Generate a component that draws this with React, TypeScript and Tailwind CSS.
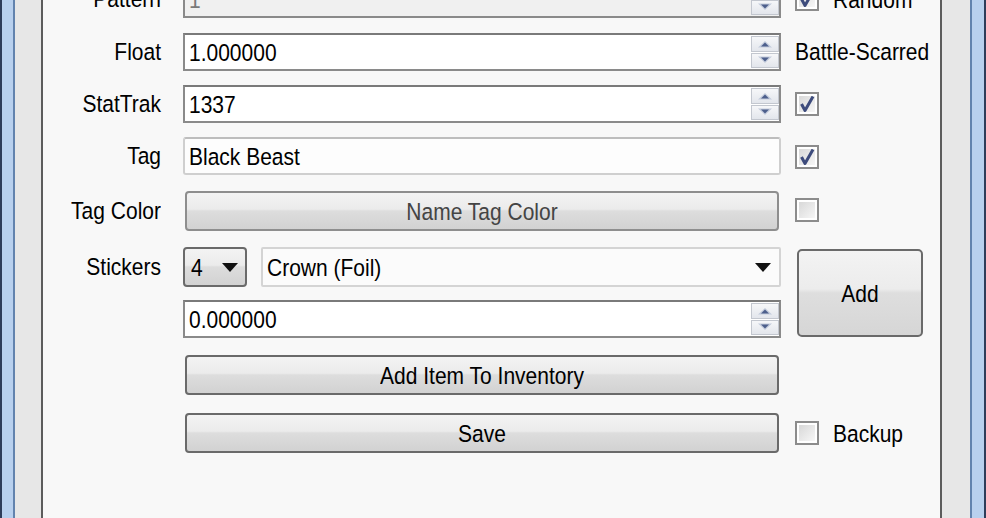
import React from "react";

const font = { fontFamily: '"Liberation Sans", Arial, sans-serif' };

function T({ children, className = "" }: { children: React.ReactNode; className?: string }) {
  return <span className={"inline-block scale-y-[1.13] whitespace-nowrap leading-none " + className}>{children}</span>;
}

function Arrow({ up }: { up?: boolean }) {
  return (
    <svg width="14" height="8" viewBox="0 0 14 8">
      {up ? (
        <>
          <path d="M0 7.5 L7 1 L14 7.5 Z" fill="#c3cbdb" />
          <path d="M3 6.5 L7 2.5 L11 6.5 Z" fill="#4d5f8c" />
        </>
      ) : (
        <>
          <path d="M0 0.5 L7 7 L14 0.5 Z" fill="#c3cbdb" />
          <path d="M3 1.5 L7 5.5 L11 1.5 Z" fill="#4d5f8c" />
        </>
      )}
    </svg>
  );
}

function Spinner() {
  return (
    <div className="flex flex-col w-[28px] h-[32px] gap-[1px] self-center">
      <div className="flex-1 flex items-center justify-center border border-[#c3c7cf] bg-gradient-to-b from-[#f6f7f9] to-[#e3e6ec]">
        <Arrow up />
      </div>
      <div className="flex-1 flex items-center justify-center border border-[#c3c7cf] bg-gradient-to-b from-[#f6f7f9] to-[#e3e6ec]">
        <Arrow />
      </div>
    </div>
  );
}

function NumInput({ value, disabled }: { value: string; disabled?: boolean }) {
  return (
    <div
      className={
        "h-[38px] w-[598px] flex items-stretch border-2 border-[#8a8a8a] border-t-[#7a7a7a] " +
        (disabled ? "bg-[#f0f0f0]" : "bg-white")
      }
    >
      <div className={"flex-1 flex items-center pl-[4px] text-[21px] " + (disabled ? "text-[#7a7a7a]" : "text-black")}>
        <T>{value}</T>
      </div>
      <Spinner />
    </div>
  );
}

function Check({ checked }: { checked?: boolean }) {
  return (
    <div className="w-[24px] h-[24px] border-2 border-[#8c8c8c] bg-white p-[2px]">
      <div className="w-full h-full bg-gradient-to-br from-[#d8d8d8] to-[#f7f7f7] flex items-center justify-center">
        {checked && (
          <svg width="16" height="16" viewBox="0 0 16 16">
            <path d="M2.5 8 L6 14.5 L14 0.5" stroke="#3d4b7c" strokeWidth="3" fill="none" strokeLinejoin="round" />
          </svg>
        )}
      </div>
    </div>
  );
}

function Btn({ children, className = "", textClass = "text-black" }: { children: React.ReactNode; className?: string; textClass?: string }) {
  return (
    <div
      className={
        "rounded-[4px] border-2 border-[#6a6a6a] flex items-center justify-center text-[21px] bg-[linear-gradient(to_bottom,#f3f3f3_0%,#ebebeb_45%,#dddddd_50%,#d2d2d2_100%)] " +
        className
      }
    >
      <T className={textClass}>{children}</T>
    </div>
  );
}

function Label({ children }: { children: React.ReactNode }) {
  return (
    <div className="w-[140px] pr-[22px] text-right text-[21px] text-black shrink-0">
      <T>{children}</T>
    </div>
  );
}

export default function App() {
  return (
    <div className="w-[986px] h-[518px] flex overflow-hidden" style={font}>
      <div className="w-[2px] bg-[#2e3d5a]" />
      <div className="w-[11px] bg-[#b8d0ee]" />
      <div className="w-[2px] bg-[#6283ae]" />
      <div className="w-[26px] bg-[#e7e7e7]" />
      <div className="w-[2px] bg-[#5c5c5c]" />

      <div className="flex-1 bg-[#f8f8f8] flex flex-col">
        {/* Pattern */}
        <div className="flex items-center mt-[-20px] h-[38px]">
          <Label>Pattern</Label>
          <NumInput value="1" disabled />
          <div className="ml-[14px] flex items-center gap-[14px]">
            <Check checked />
            <T className="text-[21px] text-black">Random</T>
          </div>
        </div>

        {/* Float */}
        <div className="flex items-center mt-[15px] h-[38px]">
          <Label>Float</Label>
          <NumInput value="1.000000" />
          <div className="ml-[14px] text-[21px] text-black">
            <T>Battle-Scarred</T>
          </div>
        </div>

        {/* StatTrak */}
        <div className="flex items-center mt-[14px] h-[38px]">
          <Label>StatTrak</Label>
          <NumInput value="1337" />
          <div className="ml-[14px]">
            <Check checked />
          </div>
        </div>

        {/* Tag */}
        <div className="flex items-center mt-[14px] h-[38px]">
          <Label>Tag</Label>
          <div className="h-[38px] w-[598px] rounded-[3px] border-2 border-[#cfcfcf] border-t-[#bdbdbd] bg-[#fdfdfd] flex items-center pl-[4px] text-[21px] text-black">
            <T>Black Beast</T>
          </div>
          <div className="ml-[14px] pt-[2px]">
            <Check checked />
          </div>
        </div>

        {/* Tag Color */}
        <div className="flex items-center mt-[16px] h-[40px]">
          <Label>Tag Color</Label>
          <div className="w-[598px] px-[2px]">
            <Btn className="h-[40px] border-[#8e8e8e] bg-[linear-gradient(to_bottom,#f2f2f2_0%,#ededed_45%,#e4e4e4_50%,#e0e0e0_100%)]" textClass="text-[#444]">
              Name Tag Color
            </Btn>
          </div>
          <div className="ml-[14px] mb-[2px]">
            <Check />
          </div>
        </div>

        {/* Stickers block */}
        <div className="flex mt-[16px]">
          <div className="flex flex-col">
            <div className="flex items-center h-[40px]">
              <Label>Stickers</Label>
              <div className="w-[598px] flex gap-[14px]">
                <div className="w-[64px] h-[40px] rounded-[4px] border-2 border-[#6a6a6a] bg-[linear-gradient(to_bottom,#f3f3f3_0%,#ebebeb_45%,#dddddd_50%,#d2d2d2_100%)] flex items-center justify-between pl-[6px] pr-[7px] text-[21px] text-black">
                  <T>4</T>
                  <svg width="16" height="9" viewBox="0 0 16 9">
                    <path d="M0 0 L16 0 L8 9 Z" fill="#111" />
                  </svg>
                </div>
                <div className="flex-1 h-[40px] rounded-[2px] border-2 border-[#d4d4d4] bg-[#fbfbfb] flex items-center justify-between pl-[4px] pr-[8px] text-[21px] text-black">
                  <T>Crown (Foil)</T>
                  <svg width="16" height="9" viewBox="0 0 16 9">
                    <path d="M0 0 L16 0 L8 9 Z" fill="#111" />
                  </svg>
                </div>
              </div>
            </div>
            <div className="flex items-center h-[38px] mt-[13px]">
              <div className="w-[140px] shrink-0" />
              <NumInput value="0.000000" />
            </div>
          </div>
          <Btn className="ml-[16px] mt-[2px] w-[126px] h-[88px] rounded-[5px] bg-[linear-gradient(to_bottom,#f3f3f3_0%,#ececec_45%,#dedede_50%,#d6d6d6_100%)]">
            Add
          </Btn>
        </div>

        {/* Add item */}
        <div className="flex items-center mt-[17px] h-[40px]">
          <div className="w-[140px] shrink-0" />
          <div className="w-[598px] px-[2px]">
            <Btn className="h-[40px]">Add Item To Inventory</Btn>
          </div>
        </div>

        {/* Save */}
        <div className="flex items-center mt-[18px] h-[40px]">
          <div className="w-[140px] shrink-0" />
          <div className="w-[598px] px-[2px]">
            <Btn className="h-[40px]">Save</Btn>
          </div>
          <div className="ml-[14px] flex items-center gap-[14px]">
            <Check />
            <T className="text-[21px] text-black">Backup</T>
          </div>
        </div>
      </div>

      <div className="w-[2px] bg-[#5c5c5c]" />
      <div className="w-[28px] bg-[#e7e7e7]" />
      <div className="w-[2px] bg-[#6283ae]" />
      <div className="w-[12px] bg-[#b8d0ee]" />
      <div className="w-[2px] bg-[#2e3d5a]" />
    </div>
  );
}
